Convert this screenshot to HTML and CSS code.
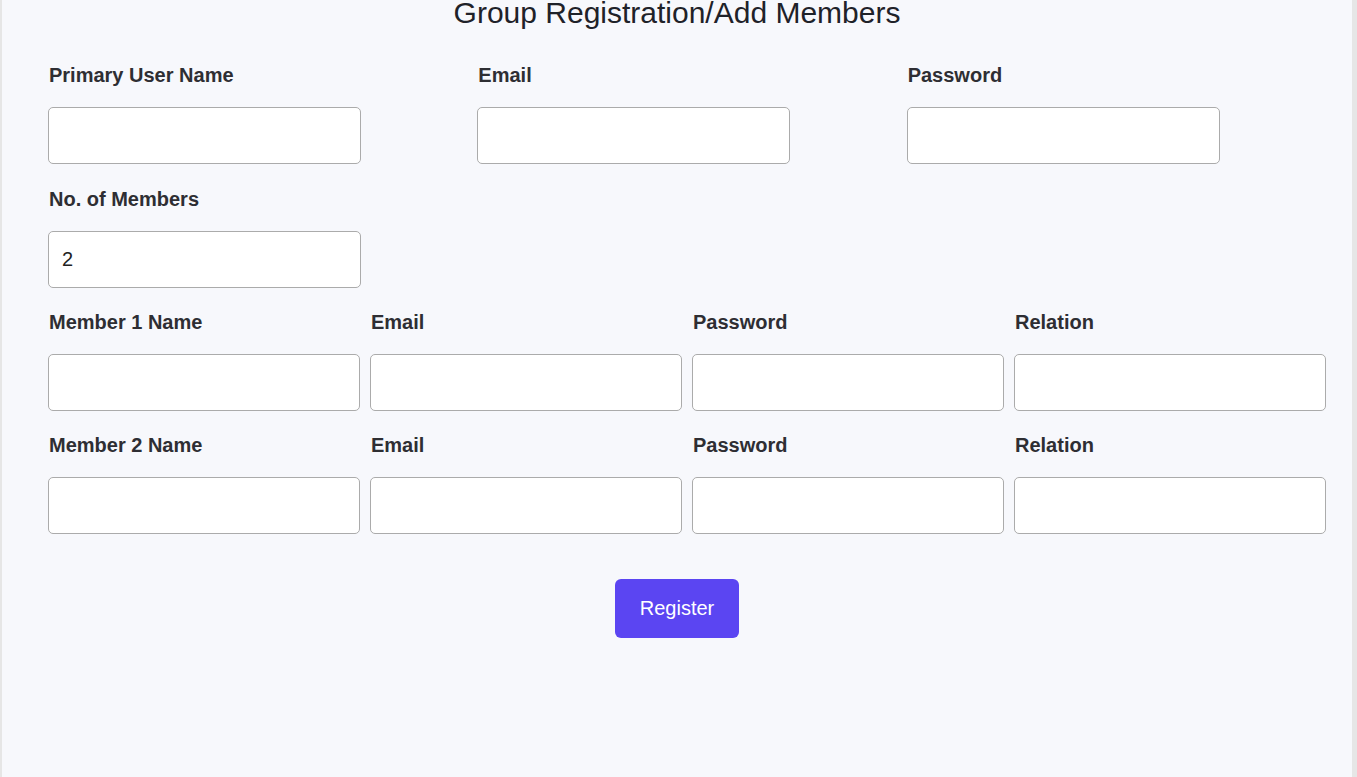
FILE: index.html
```html
<!DOCTYPE html>
<html lang="en">
<head>
<meta charset="utf-8">
<title>Group Registration</title>
<link rel="stylesheet" href="styles.css">
</head>
<body>
<div class="page">
  <div class="card">
    <h2 class="title">Group Registration/Add Members</h2>
    <form class="form">
      <div class="grid grid-3 grid-primary">
        <div class="field"><label class="label">Primary User Name</label><input class="input fixed" type="text"></div>
        <div class="field"><label class="label">Email</label><input class="input fixed" type="email"></div>
        <div class="field"><label class="label">Password</label><input class="input fixed" type="password"></div>
      </div>
      <div class="grid grid-3">
        <div class="field"><label class="label">No. of Members</label><input class="input fixed" type="number" value="2"></div>
      </div>
      <div class="grid grid-4">
        <div class="field"><label class="label">Member 1 Name</label><input class="input" type="text"></div>
        <div class="field"><label class="label">Email</label><input class="input" type="email"></div>
        <div class="field"><label class="label">Password</label><input class="input" type="password"></div>
        <div class="field"><label class="label">Relation</label><input class="input" type="text"></div>
      </div>
      <div class="grid grid-4">
        <div class="field"><label class="label">Member 2 Name</label><input class="input" type="text"></div>
        <div class="field"><label class="label">Email</label><input class="input" type="email"></div>
        <div class="field"><label class="label">Password</label><input class="input" type="password"></div>
        <div class="field"><label class="label">Relation</label><input class="input" type="text"></div>
      </div>
    </form>
    <div class="actions"><button class="btn" type="button">Register</button></div>
  </div>
</div>
</body>
</html>
```

FILE: styles.css
```css
html, body {
  margin: 0;
  padding: 0;
  height: 100%;
  overflow: hidden;
}
body {
  background: #e6e6e6;
  font-family: "Liberation Sans", Arial, sans-serif;
}
.page {
  padding: 0 5px 0 2px;
  height: 100%;
}
.card {
  margin-top: -10px;
  background: #f7f8fc;
  border-radius: 10px;
  min-height: 900px;
  padding-top: 10px;
}
.title {
  margin: 0;
  text-align: center;
  font-size: 30px;
  line-height: 26px;
  font-weight: 400;
  color: #1f2229;
}
.form {
  padding: 38px 26px 0 46px;
}
.grid {
  display: grid;
  column-gap: 10px;
}
.grid-3 { grid-template-columns: repeat(3, 1fr); }
.grid-4 { grid-template-columns: repeat(4, 1fr); }
.field {
  display: flex;
  flex-direction: column;
  align-items: flex-start;
  margin-bottom: 23px;
}
.grid-primary .field {
  margin-bottom: 24px;
}
.label {
  display: block;
  font-size: 20px;
  line-height: 22px;
  font-weight: 700;
  color: #2e2e33;
  margin: 0 0 21px 1px;
}
.input {
  box-sizing: border-box;
  width: 100%;
  height: 57px;
  border: 1px solid #ababab;
  border-radius: 5px;
  background: #fff;
  padding: 0 13px;
  font-family: "Liberation Sans", Arial, sans-serif;
  font-size: 20px;
  color: #222;
  outline: none;
  -moz-appearance: textfield;
}
.input::-webkit-outer-spin-button,
.input::-webkit-inner-spin-button {
  -webkit-appearance: none;
  margin: 0;
}
.input.fixed {
  width: 313px;
}
.actions {
  display: flex;
  justify-content: center;
  padding-top: 22px;
}
.btn {
  width: 124px;
  height: 59px;
  border: none;
  border-radius: 6px;
  background: #5b45f2;
  color: #fff;
  font-family: "Liberation Sans", Arial, sans-serif;
  font-size: 20px;
  cursor: pointer;
}
```
